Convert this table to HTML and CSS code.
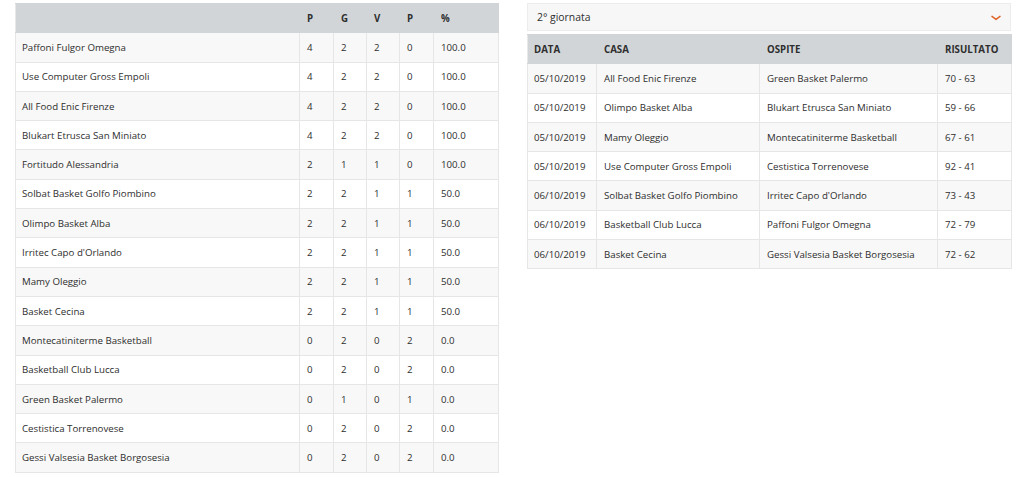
FILE: index.html
```html
<!DOCTYPE html>
<html lang="it">
<head>
<meta charset="utf-8">
<link rel="stylesheet" href="styles.css">
</head>
<body>
<div class="page">
  <section class="col col-left">
    <table class="tbl standings">
      <colgroup>
        <col class="c-name"><col class="c-n"><col class="c-n2"><col class="c-n2"><col class="c-n"><col class="c-pct">
      </colgroup>
      <thead>
        <tr><th></th><th>P</th><th>G</th><th>V</th><th>P</th><th>%</th></tr>
      </thead>
      <tbody>
        <tr><td>Paffoni Fulgor Omegna</td><td>4</td><td>2</td><td>2</td><td>0</td><td>100.0</td></tr>
        <tr><td>Use Computer Gross Empoli</td><td>4</td><td>2</td><td>2</td><td>0</td><td>100.0</td></tr>
        <tr><td>All Food Enic Firenze</td><td>4</td><td>2</td><td>2</td><td>0</td><td>100.0</td></tr>
        <tr><td>Blukart Etrusca San Miniato</td><td>4</td><td>2</td><td>2</td><td>0</td><td>100.0</td></tr>
        <tr><td>Fortitudo Alessandria</td><td>2</td><td>1</td><td>1</td><td>0</td><td>100.0</td></tr>
        <tr><td>Solbat Basket Golfo Piombino</td><td>2</td><td>2</td><td>1</td><td>1</td><td>50.0</td></tr>
        <tr><td>Olimpo Basket Alba</td><td>2</td><td>2</td><td>1</td><td>1</td><td>50.0</td></tr>
        <tr><td>Irritec Capo d'Orlando</td><td>2</td><td>2</td><td>1</td><td>1</td><td>50.0</td></tr>
        <tr><td>Mamy Oleggio</td><td>2</td><td>2</td><td>1</td><td>1</td><td>50.0</td></tr>
        <tr><td>Basket Cecina</td><td>2</td><td>2</td><td>1</td><td>1</td><td>50.0</td></tr>
        <tr><td>Montecatiniterme Basketball</td><td>0</td><td>2</td><td>0</td><td>2</td><td>0.0</td></tr>
        <tr><td>Basketball Club Lucca</td><td>0</td><td>2</td><td>0</td><td>2</td><td>0.0</td></tr>
        <tr><td>Green Basket Palermo</td><td>0</td><td>1</td><td>0</td><td>1</td><td>0.0</td></tr>
        <tr><td>Cestistica Torrenovese</td><td>0</td><td>2</td><td>0</td><td>2</td><td>0.0</td></tr>
        <tr><td>Gessi Valsesia Basket Borgosesia</td><td>0</td><td>2</td><td>0</td><td>2</td><td>0.0</td></tr>
      </tbody>
    </table>
  </section>
  <section class="col col-right">
    <div class="round-select">
      <span class="round-label">2° giornata</span>
      <svg class="chev" width="10" height="6" viewBox="0 0 10 6"><path d="M1 1.4 L5 4.4 L9 1.4" fill="none" stroke="#e0662a" stroke-width="1.5" stroke-linecap="round" stroke-linejoin="round"/></svg>
    </div>
    <table class="tbl results">
      <colgroup>
        <col class="r-date"><col class="r-home"><col class="r-away"><col class="r-score">
      </colgroup>
      <thead>
        <tr><th>DATA</th><th>CASA</th><th>OSPITE</th><th>RISULTATO</th></tr>
      </thead>
      <tbody>
        <tr><td>05/10/2019</td><td>All Food Enic Firenze</td><td>Green Basket Palermo</td><td>70 - 63</td></tr>
        <tr><td>05/10/2019</td><td>Olimpo Basket Alba</td><td>Blukart Etrusca San Miniato</td><td>59 - 66</td></tr>
        <tr><td>05/10/2019</td><td>Mamy Oleggio</td><td>Montecatiniterme Basketball</td><td>67 - 61</td></tr>
        <tr><td>05/10/2019</td><td>Use Computer Gross Empoli</td><td>Cestistica Torrenovese</td><td>92 - 41</td></tr>
        <tr><td>06/10/2019</td><td>Solbat Basket Golfo Piombino</td><td>Irritec Capo d'Orlando</td><td>73 - 43</td></tr>
        <tr><td>06/10/2019</td><td>Basketball Club Lucca</td><td>Paffoni Fulgor Omegna</td><td>72 - 79</td></tr>
        <tr><td>06/10/2019</td><td>Basket Cecina</td><td>Gessi Valsesia Basket Borgosesia</td><td>72 - 62</td></tr>
      </tbody>
    </table>
  </section>
</div>
</body>
</html>
```
FILE: styles.css
```css
html, body {
  margin: 0;
  padding: 0;
  background: #fff;
}
body {
  font-family: "Open Sans", "Liberation Sans", sans-serif;
  font-size: 9.7px;
  color: #2e2e2e;
}
.page {
  display: flex;
  align-items: flex-start;
  padding: 3px 0 0 15px;
  gap: 28px;
}
.col-left {
  width: 484px;
}
.col-right {
  width: 484px;
}
.tbl {
  width: 100%;
  border-collapse: collapse;
  table-layout: fixed;
  border: 1px solid #e6e6e6;
}
.tbl th, .tbl td {
  text-align: left;
  padding: 1px 5px 0 6px;
  height: 29.3px;
  line-height: 14px;
  border: 1px solid #e6e6e6;
  white-space: nowrap;
  box-sizing: border-box;
}
.tbl th {
  background: #d2d5d8;
  font-weight: 700;
  color: #2e2e2e;
  border-color: #d2d5d8;
  border-left-color: #e8e8e8;
}
.tbl tbody tr:nth-child(odd) td {
  background: #f8f8f8;
}
.tbl tbody tr:nth-child(even) td {
  background: #fff;
}
.standings .c-name { width: 284px; }
.standings .c-n { width: 34px; }
.standings .c-n2 { width: 33px; }
.standings td:not(:first-child), .standings th:not(:first-child) {
  padding-left: 7px;
}
.results .r-date { width: 69px; }
.results .r-home { width: 163px; }
.results .r-away { width: 178px; }
.results .r-score { width: 74px; }
.results td:not(:first-child), .results th:not(:first-child) {
  padding-left: 7px;
}
.round-select {
  display: flex;
  align-items: center;
  justify-content: space-between;
  height: 28px;
  box-sizing: border-box;
  padding: 0 9px 0 9px;
  background: #f7f7f7;
  border: 1px solid #ececec;
  margin-bottom: 3px;
  font-size: 10.4px;
  color: #2e2e2e;
}
.chev {
  display: block;
  margin-top: 1px;
}
```
